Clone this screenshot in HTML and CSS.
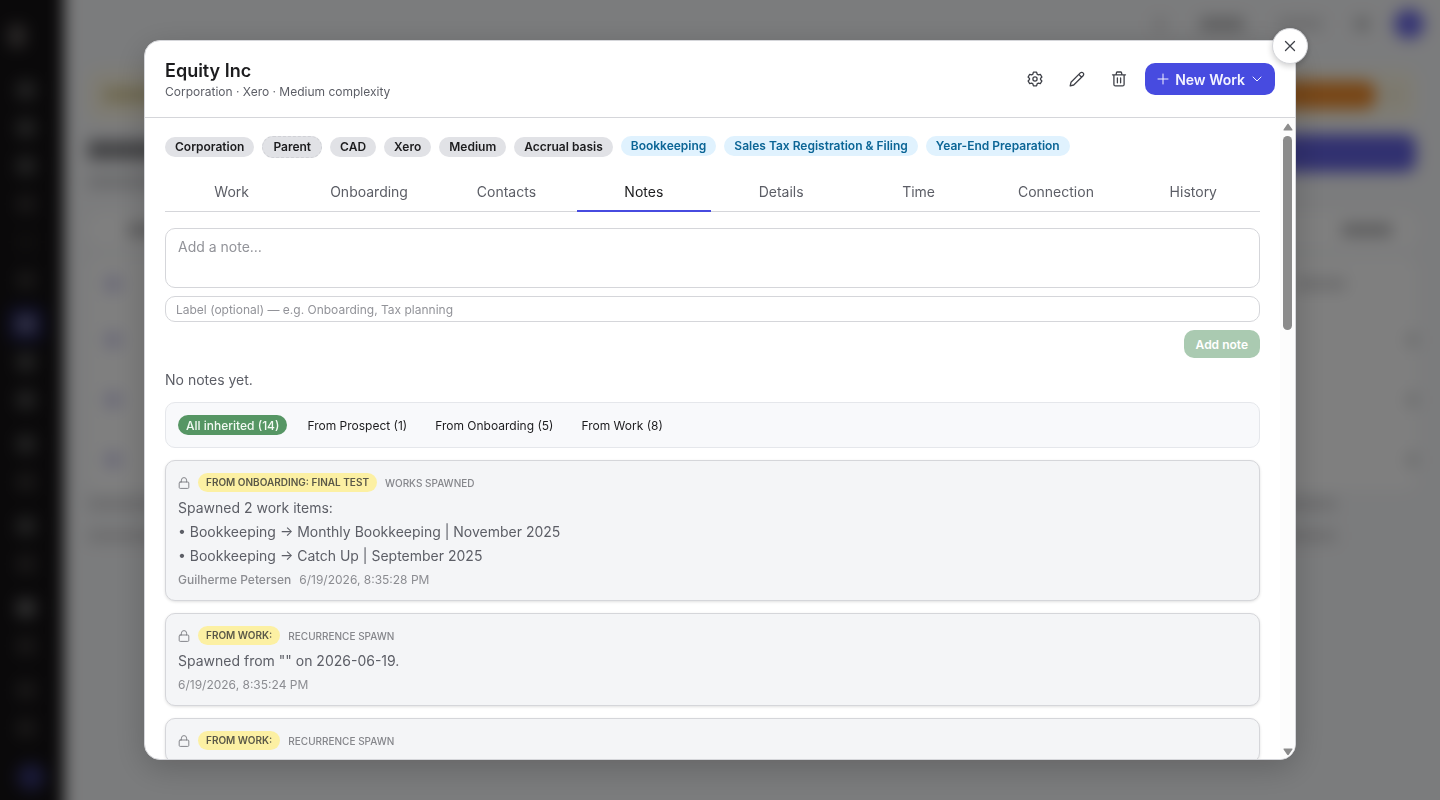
FILE: index.html
```html
<!DOCTYPE html>
<html lang="en">
<head>
    <meta charset="UTF-8">
    <meta name="viewport" content="width=device-width, initial-scale=1.0">
    <title>Equity Inc</title>
    <link rel="stylesheet" href="styles.css">
</head>
<body>
    <!-- App behind the dialog -->
    <div class="app" aria-hidden="true">
        <div class="sidebar">
            <div class="logo"></div>
            <div class="nav-group"><i></i><i></i><i></i><i class="dim"></i><i class="off"></i><i class="dim"></i></div>
            <div class="nav-group"><i class="active"></i><i></i><i></i></div>
            <div class="nav-group"><i></i><i class="dim"></i></div>
            <div class="nav-group"><i></i><i class="dim"></i></div>
            <div class="nav-group"><i class="bright"></i><i class="dim"></i></div>
            <div class="nav-group"><i class="dim"></i><i class="dim"></i></div>
            <div class="user"></div>
        </div>
        <div class="main">
            <div class="topbar">
                <span class="bar faint short"></span>
                <span class="bar mid"></span>
                <span class="bar faint mid"></span>
                <span class="bar short"></span>
                <span class="avatar"></span>
            </div>
            <div class="page">
                <div class="banner"><span class="banner-text"></span><span class="banner-btn"></span><span class="banner-x"></span></div>
                <div class="page-head">
                    <div>
                        <div class="page-title"></div>
                        <div class="page-sub"></div>
                    </div>
                    <span class="page-btn"></span>
                </div>
                <div class="filters"><span class="bar"></span><span class="bar"></span></div>
                <div class="rows">
                    <div class="row first"><span class="blob"></span><span class="bar faint"></span></div>
                    <div class="row"><span class="blob"></span><span class="end"></span></div>
                    <div class="row"><span class="blob"></span><span class="end"></span></div>
                    <div class="row"><span class="blob"></span><span class="end"></span></div>
                </div>
                <div class="foot"><span class="bar faint"></span><span class="bar faint"></span></div>
            </div>
        </div>
    </div>

    <div class="overlay">
        <div class="modal" role="dialog" aria-modal="true" aria-labelledby="modal-title">
            <button class="close" type="button" aria-label="Close" onclick="closeModal()">
                <svg width="16" height="16" viewBox="0 0 16 16"><path d="M3.5 3.5l9 9M12.5 3.5l-9 9"/></svg>
            </button>
            <div class="modal-inner">
                <header class="modal-header">
                    <div class="heading">
                        <h1 id="modal-title">Equity Inc</h1>
                        <p>Corporation · Xero · Medium complexity</p>
                    </div>
                    <div class="actions">
                        <button class="icon-btn" type="button" aria-label="Settings">
                            <svg width="16" height="16" viewBox="0 0 16 16"><path d="M6.4 1.2h3.2l.5 1.9 1.3.75 1.9-.55 1.6 2.8-1.4 1.3v1.2l1.4 1.3-1.6 2.8-1.9-.55-1.3.75-.5 1.9H6.4l-.5-1.9-1.3-.75-1.9.55-1.6-2.8 1.4-1.3V7.4L1.1 6.1l1.6-2.8 1.9.55 1.3-.75z"/><circle cx="8" cy="8" r="2.1"/></svg>
                        </button>
                        <button class="icon-btn" type="button" aria-label="Edit">
                            <svg width="16" height="16" viewBox="0 0 16 16"><path d="M1.2 14.8l.8-3.5L11.3 1.9a1.95 1.95 0 0 1 2.8 0 1.95 1.95 0 0 1 0 2.8L4.7 14zM9.8 3.4l2.8 2.8"/></svg>
                        </button>
                        <button class="icon-btn" type="button" aria-label="Delete">
                            <svg width="16" height="16" viewBox="0 0 16 16"><path d="M1.5 3.8h13M5 3.8l.5-2.2c.1-.4.4-.6.8-.6h3.4c.4 0 .7.2.8.6l.5 2.2M2.9 3.8v9.6c0 .9.6 1.5 1.5 1.5h7.2c.9 0 1.5-.6 1.5-1.5V3.8M6.4 7v4.8M9.6 7v4.8"/></svg>
                        </button>
                        <button class="primary" type="button">
                            <svg width="12" height="12" viewBox="0 0 12 12"><path d="M6 1v10M1 6h10"/></svg>
                            New Work
                            <svg width="12" height="12" viewBox="0 0 12 12"><path d="M2 4l4 4 4-4"/></svg>
                        </button>
                    </div>
                </header>

                <div class="modal-body">
                    <div class="scroll">
                        <div class="chips">
                            <span class="chip">Corporation</span>
                            <span class="chip dashed">Parent</span>
                            <span class="chip">CAD</span>
                            <span class="chip">Xero</span>
                            <span class="chip">Medium</span>
                            <span class="chip">Accrual basis</span>
                            <span class="chip service">Bookkeeping</span>
                            <span class="chip service">Sales Tax Registration &amp; Filing</span>
                            <span class="chip service">Year-End Preparation</span>
                        </div>

                        <div class="tabs" role="tablist">
                            <button type="button" role="tab">Work</button>
                            <button type="button" role="tab">Onboarding</button>
                            <button type="button" role="tab">Contacts</button>
                            <button type="button" role="tab" class="active" aria-selected="true">Notes</button>
                            <button type="button" role="tab">Details</button>
                            <button type="button" role="tab">Time</button>
                            <button type="button" role="tab">Connection</button>
                            <button type="button" role="tab">History</button>
                        </div>

                        <form class="note-form">
                            <textarea id="note" aria-label="Note" placeholder="Add a note…"></textarea>
                            <input type="text" id="label" aria-label="Label" placeholder="Label (optional) — e.g. Onboarding, Tax planning">
                            <button type="submit" disabled>Add note</button>
                        </form>

                        <p class="empty">No notes yet.</p>

                        <div class="inherited">
                            <button type="button" class="active">All inherited (14)</button>
                            <button type="button">From Prospect (1)</button>
                            <button type="button">From Onboarding (5)</button>
                            <button type="button">From Work (8)</button>
                        </div>

                        <article class="note">
                            <div class="note-head">
                                <svg width="12" height="12" viewBox="0 0 12 12"><rect x="1.2" y="5" width="9.6" height="6.4" rx="1"/><path d="M3.4 5V3.2a2.6 2.6 0 0 1 5.2 0V5"/></svg>
                                <span class="source">FROM ONBOARDING: FINAL TEST</span>
                                <span class="kind">WORKS SPAWNED</span>
                            </div>
                            <p>Spawned 2 work items:
• Bookkeeping → Monthly Bookkeeping | November 2025
• Bookkeeping → Catch Up | September 2025</p>
                            <div class="meta"><b>Guilherme Petersen</b><span>6/19/2026, 8:35:28 PM</span></div>
                        </article>

                        <article class="note">
                            <div class="note-head">
                                <svg width="12" height="12" viewBox="0 0 12 12"><rect x="1.2" y="5" width="9.6" height="6.4" rx="1"/><path d="M3.4 5V3.2a2.6 2.6 0 0 1 5.2 0V5"/></svg>
                                <span class="source">FROM WORK:</span>
                                <span class="kind">RECURRENCE SPAWN</span>
                            </div>
                            <p>Spawned from "" on 2026-06-19.</p>
                            <div class="meta"><span>6/19/2026, 8:35:24 PM</span></div>
                        </article>

                        <article class="note">
                            <div class="note-head">
                                <svg width="12" height="12" viewBox="0 0 12 12"><rect x="1.2" y="5" width="9.6" height="6.4" rx="1"/><path d="M3.4 5V3.2a2.6 2.6 0 0 1 5.2 0V5"/></svg>
                                <span class="source">FROM WORK:</span>
                                <span class="kind">RECURRENCE SPAWN</span>
                            </div>
                        </article>
                    </div>
                    <div class="scrollbar" aria-hidden="true">
                        <svg width="10" height="8" viewBox="0 0 10 8"><path d="M4.2 1.2L.6 6.4c-.3.6 0 1.1.6 1.1h7.6c.6 0 .9-.5.6-1.1L5.8 1.2c-.4-.6-1.2-.6-1.6 0z"/></svg>
                        <div class="track"><div class="thumb"></div></div>
                        <svg width="10" height="8" viewBox="0 0 10 8"><path d="M4.2 6.8L.6 1.6C.3 1 .6.5 1.2.5h7.6c.6 0 .9.5.6 1.1L5.8 6.8c-.4.6-1.2.6-1.6 0z"/></svg>
                    </div>
                </div>
            </div>
        </div>
    </div>

    <script>
        function closeModal() {
            document.querySelector('.overlay').style.display = 'none';
            document.querySelector('.app').style.filter = 'none';
        }

        // Enable the button only when there is something to save
        document.getElementById('note').addEventListener('input', function (event) {
            document.querySelector('.note-form button').disabled = !event.target.value.trim();
        });
    </script>
</body>
</html>
```
FILE: styles.css
```css
* {
    box-sizing: border-box;
}
body {
    margin: 0;
    height: 100vh;
    overflow: hidden;
    background-color: #f7f8fa;
    color: #1c1c1e;
    font-family: Inter, "Open Sans", sans-serif;
    font-size: 14px;
}
h1, p {
    margin: 0;
}
button, input, textarea {
    font-family: inherit;
}
button {
    border: none;
    background: none;
    padding: 0;
    cursor: pointer;
}
svg {
    flex: none;
    fill: none;
    stroke: currentColor;
    stroke-linecap: round;
    stroke-linejoin: round;
}

/* App behind the dialog, bleeding 32px past the window so the blur has no pale edge */
.app {
    display: flex;
    height: calc(100vh + 64px);
    margin: -32px;
    background-color: #f7f8fa;
    filter: blur(8px);
}
.sidebar {
    display: flex;
    flex-direction: column;
    gap: 8px;
    width: 96px;
    padding: 56px 8px 0 40px;
    background-color: #141214;
}
.logo {
    width: 18px;
    height: 24px;
    margin-bottom: 16px;
    border-radius: 6px;
    background-color: #55504f;
}
.nav-group {
    display: flex;
    flex-direction: column;
    gap: 2px;
}
.nav-group i {
    width: 36px;
    height: 36px;
    border: 9px solid #141214;
    border-radius: 8px;
    background-color: #4a4a4a;
}
.nav-group i.dim {
    background-color: #353232;
}
.nav-group i.off {
    background-color: #201e1e;
}
.nav-group i.bright {
    background-color: #686868;
}
.nav-group i.active {
    border-color: #1d1d4e;
    background-color: #6a6a90;
}
.user {
    width: 28px;
    height: 28px;
    margin: 9px;
    border-radius: 50%;
    background-color: #33336e;
}
.main {
    flex: 1;
    padding: 32px 32px 32px 0;
}
.bar {
    display: block;
    width: 50px;
    height: 12px;
    background-color: #b4b4b6;
}
.bar.faint {
    background-color: #d8d8da;
}
.bar.short {
    width: 12px;
}
.bar.mid {
    width: 44px;
}
.topbar {
    display: flex;
    justify-content: flex-end;
    align-items: center;
    gap: 34px;
    height: 48px;
    padding: 0 16px;
}
.avatar {
    width: 30px;
    height: 30px;
    margin-left: -8px;
    border-radius: 50%;
    background-color: #6a68e8;
}
.page {
    padding: 22px 24px;
}
.banner {
    display: flex;
    align-items: center;
    gap: 12px;
    height: 50px;
    padding: 0 16px;
    border-radius: 12px;
    background-color: #fdf8e6;
}
.banner-text {
    width: 400px;
    height: 14px;
    background-color: #dccf9c;
}
.banner-btn {
    width: 130px;
    height: 28px;
    margin-left: auto;
    border-radius: 12px;
    background-color: #f08c2c;
}
.banner-x {
    width: 12px;
    height: 12px;
    background-color: #efe6c8;
}
.page-head {
    display: flex;
    justify-content: space-between;
    margin-top: 14px;
}
.page-title {
    width: 160px;
    height: 20px;
    margin-top: 6px;
    background-color: #88888c;
}
.page-sub {
    width: 240px;
    height: 12px;
    margin-top: 16px;
    background-color: #d0d1d4;
}
.page-btn {
    width: 180px;
    height: 38px;
    border-radius: 10px;
    background-color: #6261e0;
}
.filters {
    display: flex;
    justify-content: space-between;
    align-items: center;
    height: 36px;
    margin-top: 24px;
    padding: 0 24px 0 40px;
    border-radius: 12px;
    background-color: #ffffff;
}
.rows {
    margin-top: 10px;
    border-radius: 12px;
    background-color: #ffffff;
}
.row {
    display: flex;
    align-items: center;
    justify-content: space-between;
    height: 60px;
    padding: 0 0 0 16px;
}
.row.first {
    height: 52px;
    padding-right: 70px;
}
.blob {
    width: 18px;
    height: 18px;
    border-radius: 50%;
    background-color: #d2d0ee;
}
.end {
    width: 8px;
    height: 12px;
    background-color: #c4c6c8;
}
.foot {
    display: flex;
    flex-direction: column;
    gap: 20px;
    padding-top: 8px;
}
.foot .bar {
    width: 94%;
}

/* Dialog */
.overlay {
    position: fixed;
    inset: 0;
    display: flex;
    align-items: center;
    justify-content: center;
    background-color: rgba(0, 0, 0, 0.5);
}
.modal {
    position: relative;
    display: flex;
    width: 80vw;
    height: 90vh;
    border: 1px solid #d5d6da;
    border-radius: 16px;
    background-color: #ffffff;
    box-shadow: 0 8px 32px rgba(0, 0, 0, 0.2);
}
.modal-inner {
    display: flex;
    flex-direction: column;
    flex: 1;
    min-width: 0;
    overflow: hidden;
    border-radius: 15px;
}
.close {
    position: absolute;
    top: -13px;
    right: -13px;
    display: flex;
    align-items: center;
    justify-content: center;
    width: 36px;
    height: 36px;
    border: 1px solid #d5d6da;
    border-radius: 50%;
    background-color: #ffffff;
    color: #3f4148;
    box-shadow: 0 2px 6px rgba(0, 0, 0, 0.2);
}
.close svg, .icon-btn svg {
    stroke-width: 1.3;
}
.modal-header {
    display: flex;
    align-items: center;
    justify-content: space-between;
    padding: 17px 20px;
    border-bottom: 1px solid #d5d6da;
}
.heading h1 {
    font-size: 18px;
    font-weight: 600;
    line-height: 26px;
}
.heading p {
    color: #5c5e66;
    font-size: 12px;
    line-height: 16px;
}
.actions {
    display: flex;
    align-items: center;
    gap: 10px;
}
.icon-btn {
    display: flex;
    align-items: center;
    justify-content: center;
    width: 32px;
    height: 32px;
    color: #3f4148;
}
.primary {
    display: flex;
    align-items: center;
    gap: 6px;
    height: 32px;
    padding: 0 12px;
    border-radius: 10px;
    background-color: #474be0;
    color: #f3f3ff;
    font-size: 14px;
    font-weight: 600;
}
.modal-body {
    display: flex;
    flex: 1;
    min-height: 0;
}
.scroll {
    flex: 1;
    min-width: 0;
    padding: 18px 20px 20px;
    overflow-y: auto;
    scrollbar-width: none;
}
.scrollbar {
    display: flex;
    flex-direction: column;
    align-items: center;
    gap: 5px;
    width: 15px;
    padding: 5px 0 3px;
    background-color: #fcfcfc;
    color: #8b8b8b;
}
.scrollbar svg {
    fill: currentColor;
    stroke: none;
}
.track {
    flex: 1;
    width: 9px;
}
.thumb {
    height: 32%;
    border-radius: 5px;
    background-color: #8b8b8b;
}
.chips {
    display: flex;
    flex-wrap: wrap;
    align-items: center;
    gap: 8px;
}
.chip {
    padding: 0 10px;
    border-radius: 11px;
    background-color: #e1e2e6;
    font-size: 12px;
    font-weight: 600;
    line-height: 20px;
}
.chip.dashed {
    border: 1px dashed #d0d1d6;
}
.chip.service {
    align-self: flex-start;
    background-color: #e0f2fe;
    color: #0b6596;
}
.tabs {
    display: grid;
    grid-template-columns: repeat(8, 1fr);
    gap: 4px;
    margin-top: 14px;
    border-bottom: 1px solid #d5d6da;
}
.tabs button {
    height: 40px;
    margin-bottom: -1px;
    border-bottom: 2px solid transparent;
    color: #5c5e66;
    font-size: 14px;
}
.tabs button.active {
    border-bottom-color: #474be0;
    color: #1c1c1e;
}
.note-form {
    display: flex;
    flex-direction: column;
    gap: 8px;
    margin-top: 16px;
}
.note-form textarea, .note-form input {
    width: 100%;
    border: 1px solid #d5d6da;
    border-radius: 10px;
    background-color: #ffffff;
    color: #1c1c1e;
}
.note-form textarea {
    height: 60px;
    padding: 8px 12px;
    font-size: 14px;
    line-height: 20px;
    resize: none;
}
.note-form input {
    height: 26px;
    padding: 0 10px;
    font-size: 12px;
}
::placeholder {
    color: #929399;
}
.note-form button {
    align-self: flex-end;
    height: 28px;
    padding: 0 12px;
    border-radius: 10px;
    background-color: #569664;
    color: #ffffff;
    font-size: 12px;
    font-weight: 600;
}
.note-form button:disabled {
    opacity: 0.5;
}
.empty {
    margin: 10px 0;
    color: #5c5e66;
    line-height: 24px;
}
.inherited {
    display: flex;
    gap: 12px;
    padding: 12px;
    border: 1px solid #e5e7eb;
    border-radius: 10px;
    background-color: #f8f9fb;
}
.inherited button {
    height: 20px;
    padding: 0 8px;
    border-radius: 10px;
    color: #1c1c1e;
    font-size: 12px;
}
.inherited .active {
    background-color: #569664;
    color: #f3faf4;
    font-weight: 500;
}
.note {
    margin-top: 12px;
    padding: 12px;
    border: 1px solid #d5d6da;
    border-radius: 10px;
    background-color: #f4f5f7;
    box-shadow: 0 1px 3px rgba(0, 0, 0, 0.12);
}
.note-head {
    display: flex;
    align-items: center;
    gap: 8px;
    color: #85868b;
    font-size: 10px;
    font-weight: 500;
}
.source {
    padding: 0 8px;
    border-radius: 10px;
    background-color: #fcf0a3;
    color: #5a5848;
    font-weight: 600;
    line-height: 19px;
}
.note p {
    margin: 4px 0;
    color: #5c5e66;
    line-height: 24px;
    white-space: pre-line;
}
.meta {
    display: flex;
    gap: 8px;
    color: #8b8c91;
    font-size: 12px;
    line-height: 16px;
}
.meta b {
    font-weight: 500;
}
```
